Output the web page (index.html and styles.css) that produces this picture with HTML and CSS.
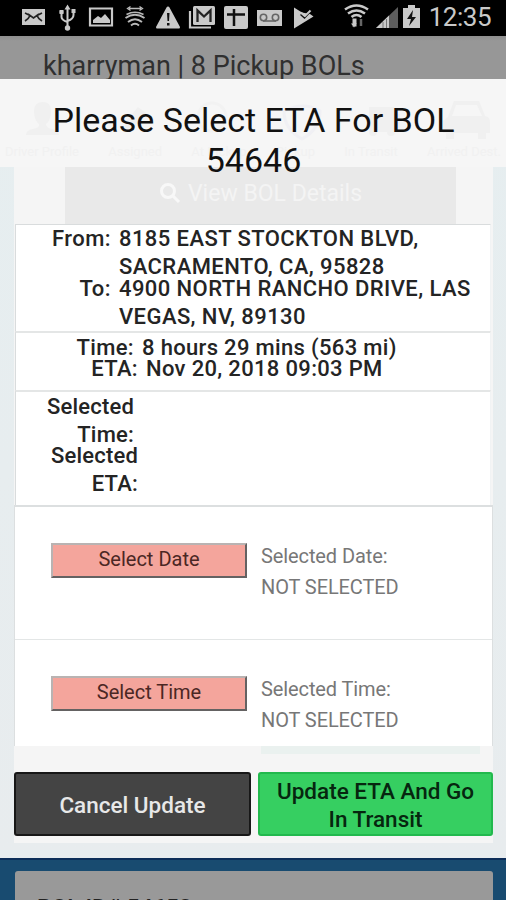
FILE: index.html
```html
<!DOCTYPE html>
<html lang="en">
<head>
<meta charset="utf-8">
<title>Select ETA</title>
<link rel="stylesheet" href="styles.css">
</head>
<body>
<div class="screen">
  <header class="status">
    <svg class="status-icons" width="506" height="36" viewBox="0 0 506 36" fill="#c9c9c9">
      <path d="M22 9h23v16H22z"/><path d="M25 13l5 2.500q-1 3-5 5.500M42 13l-5 2.500q1 3 5 5.500M28 14l5.500 4 5.500-4" fill="none" stroke="#222" stroke-width="1.700"/>
      <g fill="none" stroke="#c9c9c9" stroke-width="2"><path d="M67.500 8v19M61.500 12v5q0 3 6 5M73.500 11v4q0 4-6 6"/></g>
      <path d="M67.500 4.500l3 5h-6zM59.500 10h4v4h-4zM71.500 9h4v4h-4z"/><circle cx="67.500" cy="28" r="2.700"/><circle cx="61.500" cy="12" r="2"/>
      <path d="M90 8.500h22v17H90z" fill="none" stroke="#c9c9c9" stroke-width="2.200"/><path d="M93 23v-3l5-4 3 2 4-4 5 6v3z"/>
      <g fill="none" stroke="#b9b9b9" stroke-width="1.900"><path d="M125.500 18q9.500-6.500 19 0M128 22q7-5.500 14 0M131 25.500q4-3.500 8 0"/><path d="M129 8.500h12M130.500 6.500l-3 2 3 2M139.500 6.500l3 2-3 2" stroke-width="1.300"/><path d="M126.500 14.500q8.500-4.500 17 0" stroke-width="1.500"/></g>
      <path d="M168 6.500q1 0 1.500 1L180 27q0 1.500-1 1.500h-22q-1 0-1-1.500L166.500 7.500q.5-1 1.500-1z"/><path d="M167 13h2.500l-.5 8h-1.500zM167 23h2.500v2.500H167z" fill="#111"/>
      <path d="M190 11v16.500h21" fill="none" stroke="#c9c9c9" stroke-width="2.200"/><rect x="193" y="6" width="22" height="19" rx="1.500"/><path d="M197.500 22V10.500l6.500 6 6.500-6V22" fill="none" stroke="#222" stroke-width="2.300"/>
      <rect x="224" y="6" width="24" height="23" rx="2"/><path d="M227 14.500h18M234 9v17" stroke="#111" stroke-width="2.500"/>
      <path d="M257 10h25v16h-25z"/><g fill="none" stroke="#666" stroke-width="1.600"><circle cx="263.500" cy="17.500" r="3.200"/><circle cx="275.500" cy="17.500" r="3.200"/><path d="M263 21h13"/></g>
      <path d="M294 7.500l8 5 8 1.500 3.500 2.500L294 28.500z"/><path d="M300.500 14.500l4 3.500 7-7.500" fill="none" stroke="#111" stroke-width="1.500"/><path d="M301 12.500l4 3.500 5.500-5.500" fill="none" stroke="#c9c9c9" stroke-width="1.800"/>
      <g fill="none" stroke="#c9c9c9" stroke-width="2.600"><path d="M345 9.500q11.500-8 23 0M348 13.500q8.500-6 17 0M351.500 17q5-4 10 0"/></g><path d="M352.500 18.500h4v8h-4zm-1.500 5h6l-3 4z"/><path d="M361 19v7" stroke="#666" stroke-width="2.500"/>
      <path d="M398 7v21h-22z" fill="#5d5d5d"/><path d="M389 15.500V28h-13z"/><path d="M383 22v6M386.500 19v9" stroke="#777" stroke-width="1"/>
      <path d="M408 5h7v3h5v20h-17V8h5z"/><path d="M413 10l-6 9h4l-2 7 7-9h-4z" fill="#111"/>
    </svg>
    <span class="clock">12:35</span>
  </header>
  <div class="appbar"><span>kharryman | 8 Pickup BOLs</span></div>

  <main class="modal">
    <div class="ghost" aria-hidden="true">
      <div class="ghost-nav">
        <svg width="506" height="44" viewBox="0 0 506 44" fill="#f0f0f0">
          <path d="M43 3q8 0 8 9t-5 13q0 4 6 5t7 6H26q0-5 7-6t6-5q-5-4-5-13t9-9z"/>
          <path d="M126 22l12-14 8 6-12 14-10 4z"/><circle cx="212" cy="18" r="14" fill="none" stroke="#f2f2f2" stroke-width="3"/>
          <path d="M284 12q20-10 36 0 0 18-18 28-18-10-18-28z" fill="none" stroke="#f0f0f4" stroke-width="3"/><path d="M369 8h25v7h6v18h-5a4 4 0 01-8 0h-10a4 4 0 01-8 0z"/>
          <path d="M454 2h25l6 15q5 1 5 6v11h-4v6h-8v-6h-24v6h-8v-6h-3V22l5-4zM456 6l-4 11h30l-5-11z" fill-rule="evenodd"/>
        </svg>
        <div class="ghost-labels"><span>Driver Profile</span><span>Assigned</span><span>At Pickup</span><span>Pickup</span><span>In Transit</span><span>Arrived Dest.</span></div>
      </div>
      <div class="ghost-button">
        <svg width="22" height="22" viewBox="0 0 22 22" fill="none" stroke="#f8f8f8" stroke-width="3"><circle cx="9" cy="9" r="6.500"/><path d="M14 14l6 6"/></svg>
        <span>View BOL Details</span>
      </div>
      <div class="ghost-foot"></div>
    </div>
    <h1>Please Select ETA For BOL<br>54646</h1>
    <section class="box route">
      <div class="row"><b class="k k-route">From:</b><b class="v">8185 EAST STOCKTON BLVD,<br>SACRAMENTO, CA, 95828</b></div>
      <div class="row"><b class="k k-route">To:</b><b class="v">4900 NORTH RANCHO DRIVE, LAS<br>VEGAS, NV, 89130</b></div>
    </section>
    <section class="box trip">
      <div class="row"><b class="k k-time">Time:</b><b class="v">8 hours 29 mins (563 mi)</b></div>
      <div class="row"><b class="k k-eta">ETA:</b><b class="v">Nov 20, 2018 09:03 PM</b></div>
    </section>
    <section class="box chosen">
      <div class="row"><b class="k k-time">Selected<br>Time:</b></div>
      <div class="row"><b class="k k-eta">Selected<br>ETA:</b></div>
    </section>
    <section class="pickers">
      <div class="picker"><button class="pick">Select Date</button><p>Selected Date:<br>NOT SELECTED</p></div>
      <div class="picker"><button class="pick">Select Time</button><p>Selected Time:<br>NOT SELECTED</p></div>
    </section>
    <div class="actions">
      <button class="cancel">Cancel Update</button>
      <button class="update">Update ETA And Go<br>In Transit</button>
    </div>
  </main>
  <footer class="next"><div class="card">BOL ID# 54653</div></footer>
</div>
</body>
</html>
```
FILE: styles.css
```css
* { box-sizing: border-box; }
body { margin: 0; font-family: Roboto, "Liberation Sans", sans-serif; }
.screen { width: 506px; height: 900px; overflow: hidden; display: flex; flex-direction: column; background: #fff; }
.status { position: relative; height: 36px; flex: none; background: #000; display: flex; justify-content: flex-end; padding-right: 15px; }
.status-icons { position: absolute; left: 0; top: 0; }
.clock { font-size: 26px; line-height: 35px; color: #c9c9c9; letter-spacing: -.5px; }
.appbar { height: 43px; flex: none; background: linear-gradient(#8f8f8f, #979797 5px); padding-left: 43px; font-size: 27px; line-height: 60px; color: #303030; overflow: hidden; white-space: nowrap; }
.modal { position: relative; height: 779px; flex: none; background: linear-gradient(#e6eef0, #e8ecee); padding: 0 13px 0 14px; }
.ghost { position: absolute; left: 0; top: 0; width: 506px; height: 779px; display: flex; flex-direction: column; background: linear-gradient(90deg, transparent 14px, #f5f5f5 14px, #f5f5f5 493px, transparent 493px); background-size: 100% 764px; background-repeat: no-repeat; }
.ghost-nav { height: 88px; flex: none; background: #f6f6f6; padding-top: 20px; overflow: hidden; }
.ghost-nav svg { display: block; }
.ghost-labels { display: flex; justify-content: space-between; padding: 0 5px; font-size: 13px; line-height: 18px; color: #f1f1f1; }
.ghost-button { width: 391px; height: 57px; margin-left: 65px; flex: none; background: #e9e9e9; display: flex; align-items: center; justify-content: center; gap: 7px; font-size: 23px; color: #f4f4f4; padding-bottom: 5px; }
.ghost-foot { margin: 521px 26px 0 261px; height: 9px; background: #eaf1ef; }
h1 { position: relative; margin: 0; height: 145px; padding-top: 21px; text-align: center; font-size: 34px; line-height: 40px; font-weight: 400; color: #111; white-space: nowrap; }
.box { position: relative; margin: 0 2px 0 1px; background: #fff; border: 1px solid #d9dcdd; border-right-color: #f1f3f4; font-size: 22px; line-height: 28px; color: #242424; white-space: nowrap; letter-spacing: .33px; }
.box b { font-weight: 500; }
.route { height: 107px; border-bottom-width: 0; letter-spacing: .42px; }
.trip { height: 59px; border-top: 2px solid #e4e6e6; border-bottom: 0; padding-top: 1px; }
.chosen { height: 115px; border-top: 2px solid #e4e6e6; border-bottom: 0; padding-top: 1px; letter-spacing: .2px; }
.row { display: flex; gap: 8px; margin-bottom: -7px; }
.route .row { margin-bottom: -6.500px; }
.k { text-align: right; flex: none; }
.k-route { width: 95px; }
.k-time { width: 118px; }
.k-eta { width: 122px; }
.pickers { position: relative; height: 241px; background: #fff; border: 2px solid #dcdfe0; border-width: 2px 1px 0; }
.picker { height: 133px; display: flex; gap: 14px; padding-left: 36px; border-bottom: 1px solid #e3e6e6; }
.picker:last-child { border: 0; height: 106px; }
.pick { width: 196px; height: 35px; margin: 36px 0 0; padding: 0 0 3px; font: 400 20px/26px Roboto, sans-serif; color: #4b2724; background: #f4a59c; border: 2px solid; border-color: #b9b3b2 #646262 #646262 #b9b3b2; }
.picker p { margin: 34px 0 0; font-size: 20px; line-height: 31px; letter-spacing: -.1px; color: #777; white-space: nowrap; }
.actions { position: relative; display: flex; gap: 7px; margin-top: 26px; }
.actions button { height: 64px; border-radius: 3px; padding: 1px 0 0; font: 500 22.500px/28px Roboto, sans-serif; white-space: nowrap; }
.cancel { width: 237px; background: #444; border: 2px solid #171717; color: #e8e8e8; }
.update { width: 235px; background: #36cf61; border: 2px solid #22b94d; color: #06260f; }
.next { flex: 1; background: #184b70; border-top: 2px solid #0d2d58; padding: 11px 13px 0 15px; overflow: hidden; }
.card { height: 60px; padding: 24px 0 0 22px; background: #999; border-radius: 3px 3px 0 0; color: #222; font-size: 23px; line-height: 28px; font-weight: 500; }
```
